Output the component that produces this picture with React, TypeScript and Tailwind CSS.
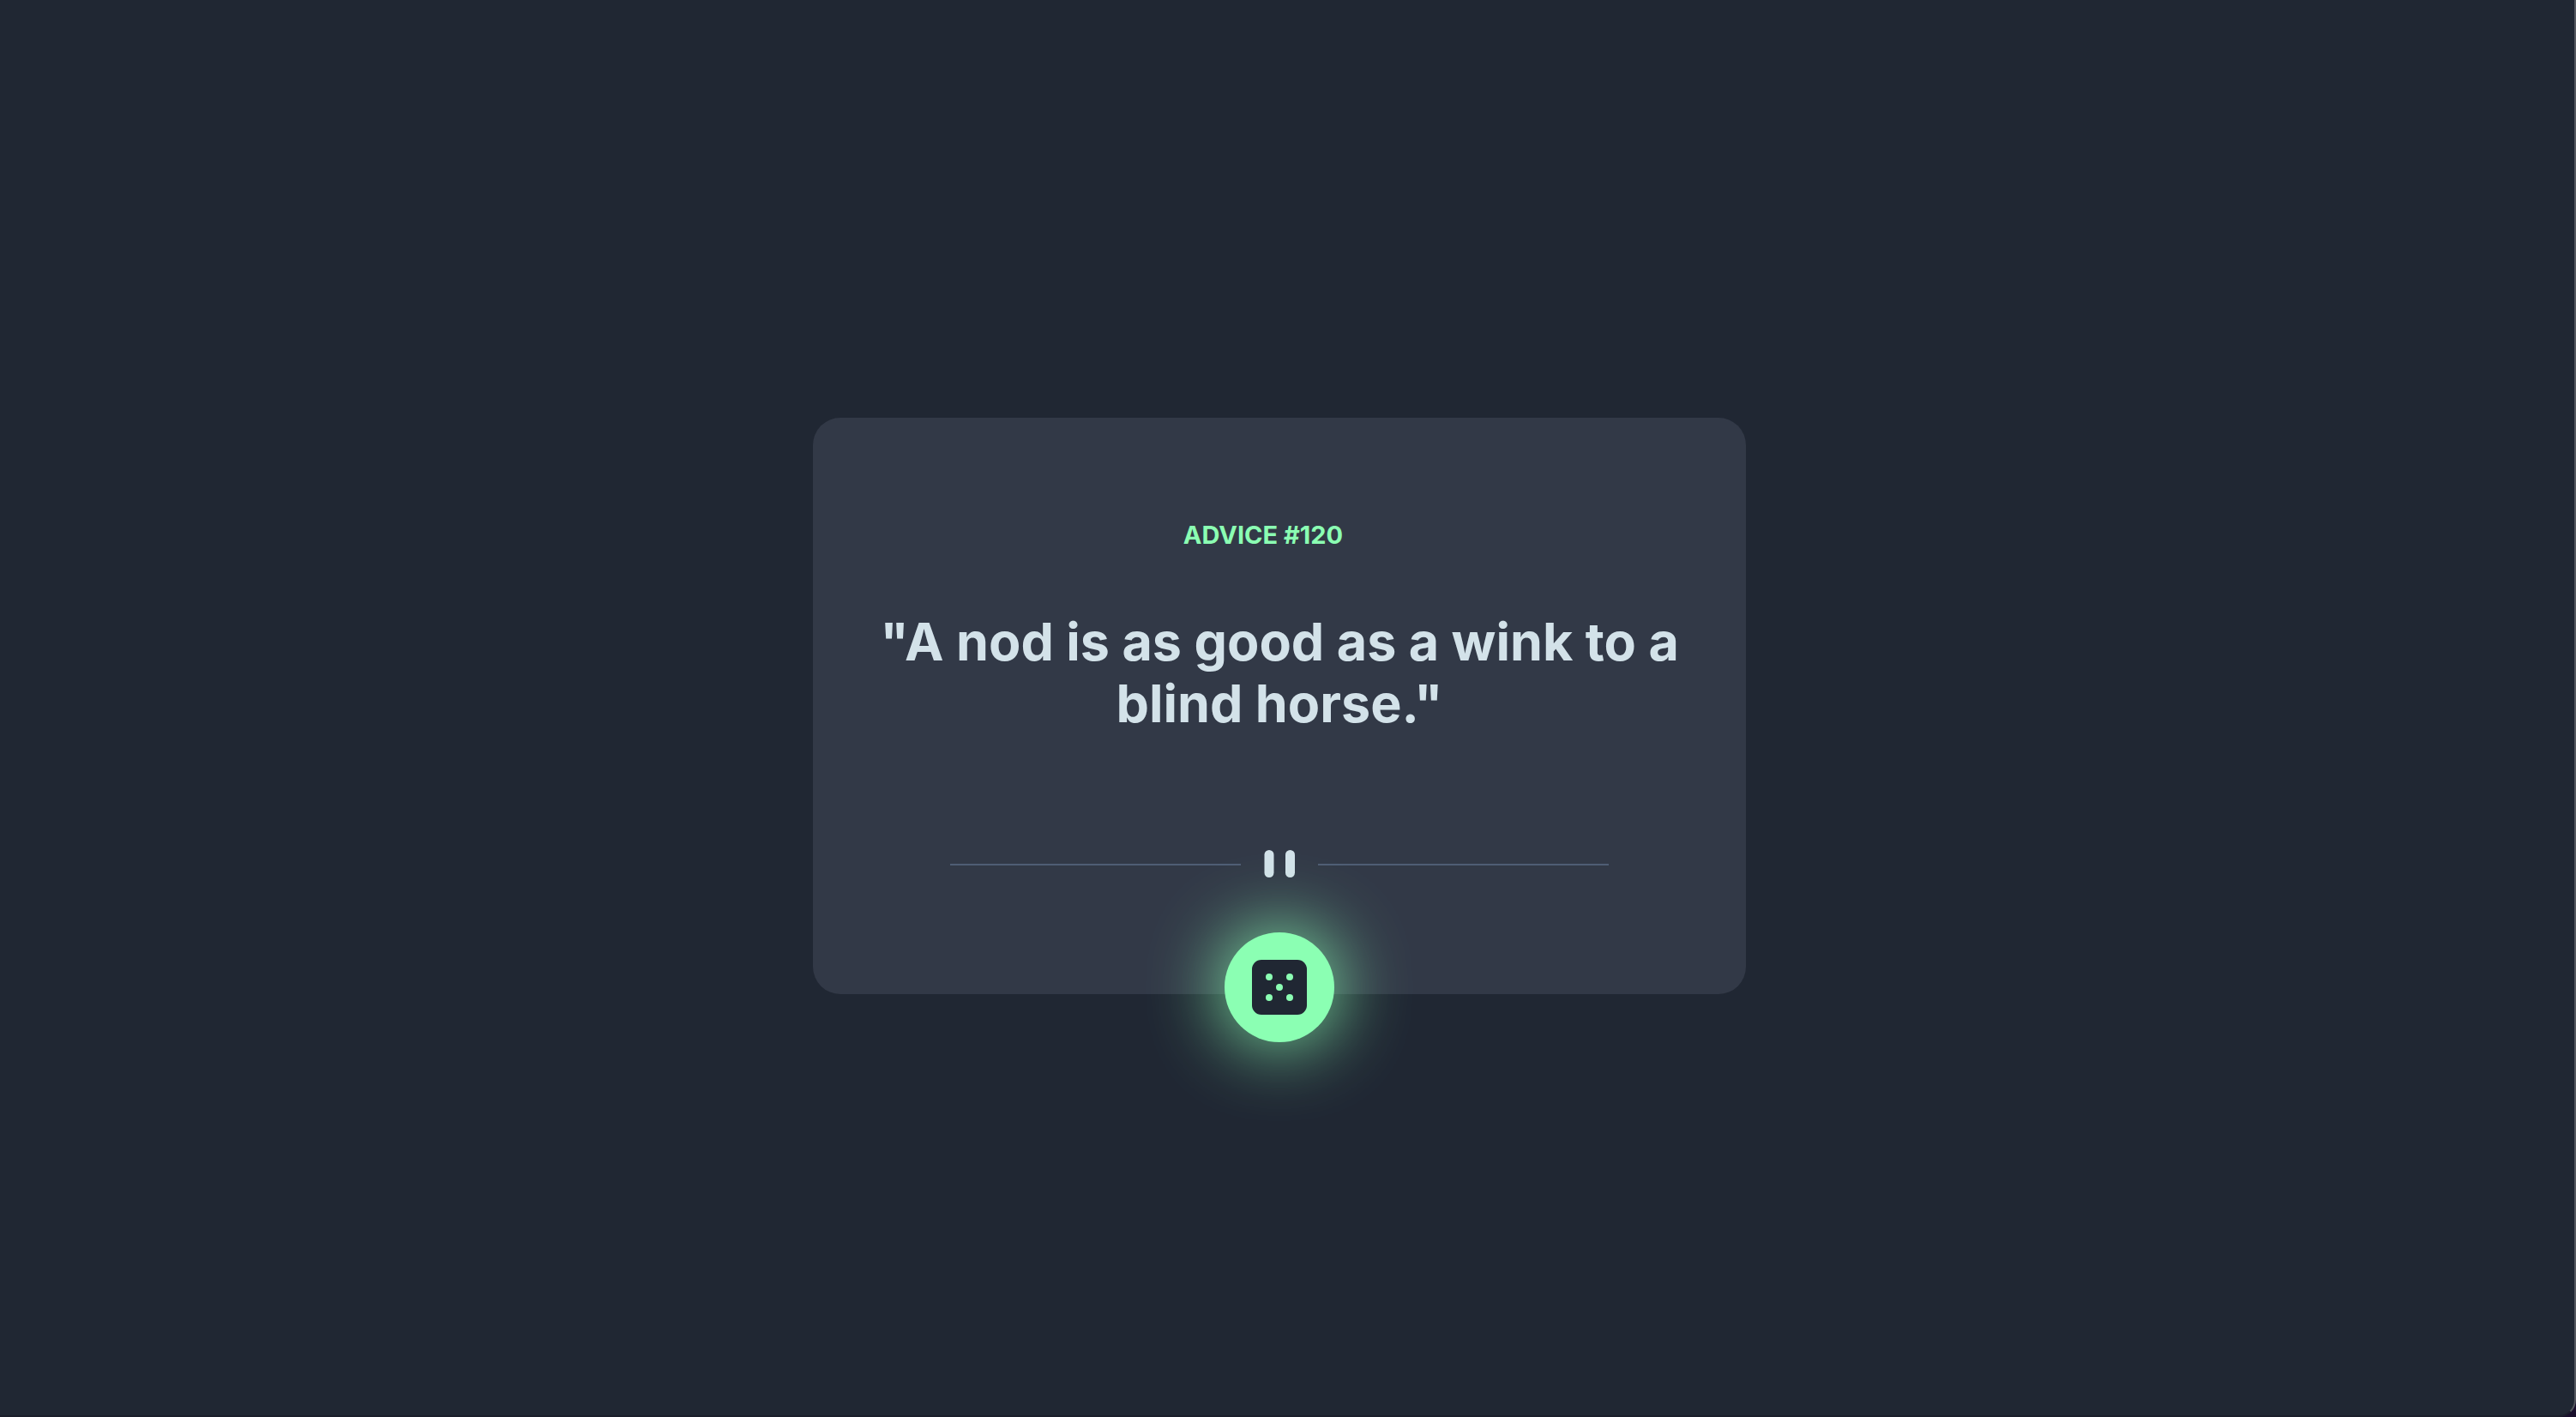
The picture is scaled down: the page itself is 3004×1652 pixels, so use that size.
function Divider() {
  return (
    <svg viewBox="0 0 768 32" className="mt-[135px] h-8 w-full max-w-192" aria-hidden="true">
      <path fill="#4F5D74" d="M0 16h339v2H0zM429 16h339v2H429z" />
      <rect x="366.5" width="11" height="32" rx="5.5" fill="#D3E2E9" />
      <rect x="391" width="11" height="32" rx="5.5" fill="#D3E2E9" />
    </svg>
  );
}

function Dice() {
  return (
    <svg viewBox="0 0 64 64" className="size-16" aria-hidden="true">
      <rect width="64" height="64" rx="11" fill="#202733" />
      <g fill="#8BFFB3">
        <circle cx="20" cy="20" r="4" />
        <circle cx="44" cy="20" r="4" />
        <circle cx="32" cy="32" r="4" />
        <circle cx="20" cy="44" r="4" />
        <circle cx="44" cy="44" r="4" />
      </g>
    </svg>
  );
}

export default function App() {
  return (
    <div className="flex min-h-screen bg-[#190f2c]">
      <main className="flex w-full items-center justify-center rounded-br-[20px] border-r-2 border-b-2 border-r-[#55585f] border-b-[#1b1e2b] bg-[#202733] pr-[18px] pb-1 font-['Inter',sans-serif]">
        <section className="relative flex min-h-168 w-full max-w-272 flex-col items-center rounded-4xl bg-[#323947] px-16 pt-[121px] pb-[128px] text-center font-bold">
          <h1 className="pr-[38px] text-[29px] leading-8 text-[#8BFFB3]">ADVICE #120</h1>
          <p className="mt-[72px] text-[61px] leading-[72px] text-[#D3E2E9]">
            "A nod is as good as a wink to a blind horse."
          </p>
          <Divider />
          <button
            type="button"
            aria-label="New advice"
            className="absolute -bottom-14 left-1/2 flex size-32 -translate-x-1/2 items-center justify-center rounded-full bg-[#8BFFB3] shadow-[0_0_90px_#8BFFB3]"
          >
            <Dice />
          </button>
        </section>
      </main>
    </div>
  );
}
